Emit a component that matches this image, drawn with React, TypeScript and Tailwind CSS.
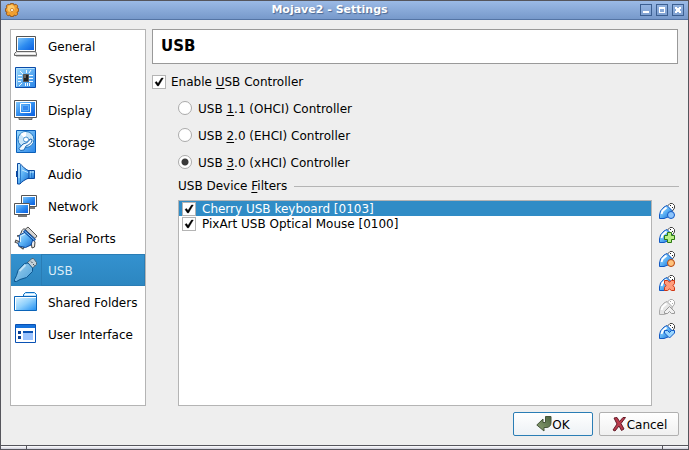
import React, { useState } from "react";

const GeneralIcon = () => (
  <svg viewBox="0 0 24 24" className="size-6 shrink-0">
    <path d="M2.500 2.500h19v15h-19z" fill="#fff" stroke="#555" />
    <path d="M4 4h16v12H4z" fill="url(#screen)" />
    <path d="M2.500 17.500h19l1 2v2H.5v-2z" fill="#e2e2e2" stroke="#666" />
    <path d="M3 19.500h18" stroke="#fff" />
    <path d="M2 22.500h21" stroke="#c4c4c4" />
  </svg>
);

const SystemIcon = () => (
  <svg viewBox="0 0 24 24" className="size-6 shrink-0">
    <path d="M1.500 1.500h20v20h-20z" fill="url(#tile)" stroke="#0b4aa8" />
    <path d="M2.500 20.500v-18h18" fill="none" stroke="#b4e2fd" />
    <path
      d="M4 9.500h4M4 12.500h4M4 15.500h3M15 9.500h4M15 12.500h4M15 15.500h4M12.500 4v3M15 7l2-3M11.500 17v3M13.500 17v3M15.500 17v3M8 17l-3 3M6 5l3 3"
      stroke="#f2faff"
    />
    <path d="M9.500 8.500h5v7h-5z" fill="#222" stroke="#555" />
    <path d="M10 9h2v3h-2z" fill="#666" />
  </svg>
);

const DisplayIcon = () => (
  <svg viewBox="0 0 24 24" className="size-6 shrink-0">
    <path d="M5 20h13v1.500H5z" fill="#ddd" stroke="#666" />
    <path d="M.5 2.500h22v17H.5z" fill="#fff" stroke="#555" />
    <path d="M2 4h19v14H2z" fill="url(#screen)" />
    <path d="M6.500 5.500h10v9h-10z" fill="none" stroke="#fff" />
    <path d="M8.500 7.500h6v5h-6z" fill="#3387ee" stroke="#5fb0f8" />
  </svg>
);

const StorageIcon = () => (
  <svg viewBox="0 0 24 24" className="size-6 shrink-0">
    <path d="M2.500 .5h19v22h-19z" fill="url(#tile)" stroke="#0b5fb8" />
    <circle cx="12" cy="9.500" r="8" fill="#c9e6fa" stroke="#2478c0" />
    <path d="M12 9.500L6.500 4A8 8 0 0112 2zM12 9.500l7 2.500a8 8 0 01-4 4z" fill="#fff" />
    <circle cx="12" cy="9.500" r="2.500" fill="#fff" stroke="#4b94cf" />
    <path
      d="M18 9.500c0 4-3 5-6 6.500l-2 4-3.500.5-1.500-2 4-4.500c3-1 5-1 7-5z"
      fill="#f4fbff"
      stroke="#1867b4"
    />
  </svg>
);

const AudioIcon = () => (
  <svg viewBox="0 0 24 24" className="size-6 shrink-0">
    <path d="M13 8.500h7.500v8H13z" fill="url(#metal)" stroke="#0b4aa0" />
    <path
      d="M3.500 1.500H6c2 2.500 5 5.500 9 7.500v7c-4 1.500-7 3.500-9 6H3.500z"
      fill="url(#metal)"
      stroke="#0b4aa0"
    />
    <path d="M2.500 9v6" stroke="#0b4aa0" />
    <path d="M6.500 3v18M17.500 9v7" stroke="#2a7acb" />
    <path d="M5 3v13M8 8l6 2.500M16 10h4" stroke="#c2e7ff" />
  </svg>
);

const NetworkIcon = () => (
  <svg viewBox="0 0 24 24" className="size-6 shrink-0">
    <path d="M12 14h9" stroke="#777" strokeWidth="2" />
    <path d="M7.500 1.500h15v11h-15z" fill="#fff" stroke="#555" />
    <path d="M9 3h12v8H9z" fill="url(#screen)" />
    <path d="M4 22h9" stroke="#777" strokeWidth="2" />
    <path d="M.5 9.500h15v11H.5z" fill="#fff" stroke="#555" />
    <path d="M2 11h12v8H2z" fill="url(#screen)" />
  </svg>
);

const SerialIcon = () => (
  <svg viewBox="0 0 24 24" className="size-6 shrink-0">
    <path d="M1 15l5 2M5 19l5 3.500" stroke="#555" strokeWidth="3" />
    <path d="M2 15.500l4 1.500M6 19.500l3 2" stroke="#ddd" />
    <path d="M11 3.500l3-2.500L23 10l-2 2.500z" fill="#d5d5d5" stroke="#555" />
    <path
      d="M3 10l3-.5 2-5 2-2 2 2-3 5zM17 16l1-4 3 4-.5 5-2.500 1z"
      fill="#eee"
      stroke="#444"
    />
    <path
      d="M5 9.500L11.500 6l7.500 7-2 6-5.500 2.500-6.500-1.500-1-2.500 2-2z"
      fill="url(#metal)"
      stroke="#0b4aa0"
    />
    <path d="M10 4.500l11 10" stroke="#0b4aa0" strokeWidth="3" />
    <path d="M10.500 5l10 9" stroke="#8fd0ff" />
    <path d="M6 10.500l5-2.500M6.500 11v5" stroke="#d5f0ff" />
  </svg>
);

const UsbIcon = () => (
  <svg viewBox="0 0 24 24" className="size-6 shrink-0">
    <path d="M13 5l5-4.500h1.500l3 4v2L18 10.500z" fill="#c3d0d8" stroke="#4e6676" />
    <path d="M17 3.500l1.500 1.500M19 6l1.500 1.500" stroke="#3c4d58" />
    <path
      d="M10.500 5.500l3.500-.5 4.500 5v3.500l-6 6-6.500 2-3.500 2h-2v-2l2-4 1.500-5z"
      fill="url(#plug)"
      stroke="#0d568f"
    />
    <path d="M5.500 13l6-6" stroke="#c0e2f6" strokeWidth="2" />
  </svg>
);

const FolderIcon = () => (
  <svg viewBox="0 0 24 24" className="size-6 shrink-0">
    <path d="M9.500 7V4.500l2-2h9l2 2V20H9.500z" fill="#bfe5ff" stroke="#0d70c4" />
    <path d="M11 4.500h10" stroke="#fff" />
    <path d="M.5 6.500h22v14H.5z" fill="url(#folder)" stroke="#0b64b8" />
    <path d="M1.500 20V7.500H22" fill="none" stroke="#fff" />
  </svg>
);

const InterfaceIcon = () => (
  <svg viewBox="0 0 24 24" className="size-6 shrink-0">
    <path d="M1.500 2.500h20v18h-20z" fill="#fff" stroke="#0a52b4" />
    <path d="M2 3h19v3H2z" fill="#1672dc" />
    <path d="M4 9h3v3H4zM4 14h3v3H4z" fill="#0a3f94" />
    <path d="M9 9h10v9H9z" fill="#9cc4ff" />
    <path d="M9 9h10v2H9z" fill="#0a52b4" />
  </svg>
);

const pages = [
  { name: "General", icon: GeneralIcon },
  { name: "System", icon: SystemIcon },
  { name: "Display", icon: DisplayIcon },
  { name: "Storage", icon: StorageIcon },
  { name: "Audio", icon: AudioIcon },
  { name: "Network", icon: NetworkIcon },
  { name: "Serial Ports", icon: SerialIcon },
  { name: "USB", icon: UsbIcon },
  { name: "Shared Folders", icon: FolderIcon },
  { name: "User Interface", icon: InterfaceIcon },
];

const controllers = [
  { id: "ohci", key: "1", rest: ".1 (OHCI) Controller" },
  { id: "ehci", key: "2", rest: ".0 (EHCI) Controller" },
  { id: "xhci", key: "3", rest: ".0 (xHCI) Controller" },
];

const tools = [
  {
    title: "Add empty filter",
    badge: <circle cx="12" cy="12" r="3.500" fill="#8cc4fc" stroke="#1259c3" />,
  },
  {
    title: "Add filter from device",
    badge: (
      <path
        d="M8.500 5.500h4v3h3v4h-3v3h-4v-3h-3v-4h3z"
        fill="#b9ee86"
        stroke="#2b7a12"
      />
    ),
  },
  {
    title: "Edit filter",
    badge: <circle cx="12" cy="12" r="3.500" fill="#ffc27c" stroke="#b5430d" />,
  },
  {
    title: "Remove filter",
    badge: (
      <path
        d="M5.500 5.500h3l2 1.500 2-1.500h3v3l-1.500 2 1.500 2v3h-3l-2-1.500-2 1.500h-3v-3l1.500-2-1.500-2z"
        fill="#ff9c7c"
        stroke="#cf3512"
      />
    ),
  },
  {
    title: "Move filter up",
    disabled: true,
    badge: (
      <path
        d="M5.500 12.500l5-5 5 5v2h-3l-2-2-2 2h-3z"
        fill="#f0f0f0"
        stroke="#999"
      />
    ),
  },
  {
    title: "Move filter down",
    badge: (
      <path
        d="M5.500 7.500h3l2 2 2-2h3V10l-5 5-5-5z"
        fill="#9ad6ff"
        stroke="#1259c3"
      />
    ),
  },
];

const CheckBox = ({ id, checked, onChange }: any) => (
  <span className="grid shrink-0 place-items-center">
    <input
      id={id}
      type="checkbox"
      checked={checked}
      onChange={onChange}
      className="col-start-1 row-start-1 size-[14px] appearance-none border border-[#b4b4b4] bg-white"
    />
    {checked && (
      <svg
        viewBox="0 0 14 14"
        className="pointer-events-none col-start-1 row-start-1 size-[14px]"
      >
        <path
          d="M3 7.500l1.500-1L6 8.500 9.500 3h1.800L6.500 11H5.500z"
          fill="#000"
          stroke="#000"
          strokeWidth=".4"
        />
      </svg>
    )}
  </span>
);

const TitleBar = () => (
  <header className="flex h-5 items-center border-t border-b border-t-[#55555c] border-b-[#5474a4] bg-linear-to-b from-[#9bbae6] to-[#7799cb] pr-1 pl-1">
    <svg viewBox="0 0 14 14" className="size-[14px]">
      <path
        d="M5.500.5h3l.5 1.500 2-.8 1.800 1.800-.8 2 1.500.5v3l-1.500.5.8 2-1.800 1.800-2-.8-.5 1.500h-3L5 12l-2 .8L1.200 11l.8-2-1.500-.5v-3L2 5l-.8-2L3 1.200l2 .8z"
        fill="#f09f30"
        stroke="#8a4c14"
        strokeWidth=".8"
      />
      <circle cx="6" cy="5.500" r="3.600" fill="#fcca6c" />
      <circle cx="7" cy="7" r="1.600" fill="#fff6e2" stroke="#c87a22" strokeWidth=".8" />
    </svg>
    <h1 className="flex-1 text-center text-[11px] font-bold text-white text-shadow-[1px_1px_1px_#4a6792]">
      Mojave2 - Settings
    </h1>
    <div className="flex gap-1">
      <button aria-label="Minimize" className="size-3 border border-[#3c5f91]">
        <svg viewBox="0 0 10 10" className="size-[10px]">
          <path d="M2 6h6v2H2z" fill="#fff" />
        </svg>
      </button>
      <button aria-label="Maximize" className="size-3 border border-[#3c5f91]">
        <svg viewBox="0 0 10 10" className="size-[10px]">
          <path d="M2 2h6v6H2zM3 4v3h4V4z" fill="#fff" fillRule="evenodd" />
        </svg>
      </button>
      <button aria-label="Close" className="size-3 border border-[#3c5f91]">
        <svg viewBox="0 0 10 10" className="size-[10px]">
          <path d="M2 2h2v1h2V2h2v2H7v2h1v2H6V7H4v1H2V6h1V4H2z" fill="#fff" />
        </svg>
      </button>
    </div>
  </header>
);

// gradients shared by all the icons
const Gradients = () => (
  <svg className="absolute size-0">
    <defs>
      <linearGradient id="screen" x1="0" y1="0" x2="1" y2="1">
        <stop offset="0" stopColor="#7cc4fb" />
        <stop offset=".5" stopColor="#2f8df0" />
        <stop offset="1" stopColor="#0a5fe0" />
      </linearGradient>
      <linearGradient id="tile" x1="0" y1="0" x2="1" y2="1">
        <stop offset="0" stopColor="#9bdafd" />
        <stop offset="1" stopColor="#2a86e8" />
      </linearGradient>
      <linearGradient id="metal" x1="0" y1="0" x2="1" y2="1">
        <stop offset="0" stopColor="#c0e8ff" />
        <stop offset=".5" stopColor="#5cb2f5" />
        <stop offset="1" stopColor="#1668cc" />
      </linearGradient>
      <linearGradient id="plug" x1="0" y1="0" x2="1" y2="1">
        <stop offset="0" stopColor="#9ccfee" />
        <stop offset="1" stopColor="#4fa2da" />
      </linearGradient>
      <linearGradient id="folder" x1="0" y1="0" x2="1" y2="1">
        <stop offset="0" stopColor="#e4f6ff" />
        <stop offset=".5" stopColor="#8fd0fc" />
        <stop offset="1" stopColor="#1d8df2" />
      </linearGradient>
      <linearGradient id="enter" x1="1" y1="0" x2="0" y2="1">
        <stop offset="0" stopColor="#4d6340" />
        <stop offset="1" stopColor="#8da274" />
      </linearGradient>
    </defs>
  </svg>
);

const App = () => {
  const [page, setPage] = useState("USB");
  const [enabled, setEnabled] = useState(true);
  const [controller, setController] = useState("xhci");
  const [selected, setSelected] = useState(1);
  const [filters, setFilters] = useState([
    { id: 1, name: "Cherry USB keyboard [0103]", active: true },
    { id: 2, name: "PixArt USB Optical Mouse [0100]", active: true },
  ]);

  const toggleFilter = (id: number) =>
    setFilters(
      filters.map((f) => (f.id === id ? { ...f, active: !f.active } : f))
    );

  return (
    <div className="flex min-h-screen flex-col border-x border-[#55555c] bg-[#eeeeee] font-['DejaVu_Sans',sans-serif] text-xs text-black">
      <Gradients />
      <TitleBar />
      <div className="flex flex-1 gap-[6px] px-[9px] pt-[9px]">
        <nav className="w-[136px] shrink-0 border border-[#b4b4b4] bg-white">
          {pages.map(({ name, icon: PageIcon }) => (
            <button
              key={name}
              onClick={() => setPage(name)}
              className={
                page === name
                  ? "flex h-8 w-full items-center bg-linear-to-b from-[#3492d0] to-[#2c86c0] pl-[3px] text-left whitespace-nowrap text-[#dcecf7]"
                  : "flex h-8 w-full items-center pl-[3px] text-left whitespace-nowrap"
              }
            >
              <PageIcon />
              <span
                className={
                  page === name
                    ? "ml-[3px] flex h-8 flex-1 items-center border border-[#2a7db5] pt-0.5 pl-[6px]"
                    : "pt-0.5 pl-[10px]"
                }
              >
                {name}
              </span>
            </button>
          ))}
        </nav>

        <main className="flex min-w-0 flex-1 flex-col">
          <h2 className="mr-px flex h-[35px] items-center border border-[#999] bg-white px-2 text-[15px] font-bold">
            USB
          </h2>
          <div className="flex h-[35px] items-center gap-[5px]">
            <CheckBox
              id="enable"
              checked={enabled}
              onChange={() => setEnabled(!enabled)}
            />
            <label htmlFor="enable">
              Enable <u className="underline-offset-2">U</u>SB Controller
            </label>
          </div>
          <div className="flex flex-1 flex-col pl-[26px]">
            {controllers.map((c) => (
              <label
                key={c.id}
                className="mb-[9px] flex h-[18px] items-center gap-[6px]"
              >
                <input
                  type="radio"
                  name="controller"
                  checked={controller === c.id}
                  onChange={() => setController(c.id)}
                  className="size-[14px] appearance-none rounded-full border border-[#aaa] bg-white checked:bg-[radial-gradient(circle,#3a3a3a_3px,#fff_4px)]"
                />
                <span className="pt-0.5">
                  USB <u className="underline-offset-2">{c.key}</u>
                  {c.rest}
                </span>
              </label>
            ))}
            <div className="flex h-5 items-center gap-[7px] pb-2">
              <h3>
                USB Device <u className="underline-offset-2">F</u>ilters
              </h3>
              <hr className="flex-1 border-t-[#b4b4b4]" />
            </div>
            <div className="flex flex-1 gap-[6px]">
              <ul className="flex-1 border border-[#b4b4b4] bg-white">
                {filters.map((f) => (
                  <li
                    key={f.id}
                    onClick={() => setSelected(f.id)}
                    className={
                      selected === f.id
                        ? "flex h-[15px] items-center gap-[6px] bg-[#308cc6] pl-[3px] text-white"
                        : "flex h-[15px] items-center gap-[6px] pl-[3px]"
                    }
                  >
                    <CheckBox
                      id={"filter" + f.id}
                      checked={f.active}
                      onChange={() => toggleFilter(f.id)}
                    />
                    <label htmlFor={"filter" + f.id}>{f.name}</label>
                  </li>
                ))}
              </ul>
              <div className="flex w-[21px] flex-col gap-2 pt-[3px] pl-px">
                {tools.map((t) => (
                  <button
                    key={t.title}
                    aria-label={t.title}
                    disabled={t.disabled}
                    className="size-4"
                  >
                    <svg viewBox="0 0 16 16" className="size-4">
                      <path
                        d="M8 3.500l3-3h2.500l2 2V5l-2.500 3.500z"
                        fill="#fff"
                        stroke={t.disabled ? "#aaa" : "#444"}
                      />
                      <path
                        d="M11 2h1v1h-1zM13 4h1v1h-1z"
                        fill={t.disabled ? "#aaa" : "#222"}
                      />
                      <path
                        d="M.5 15.500V12l1-4 3.500-4 3-1.500 5 5V10L9 14l-4 1.500z"
                        fill={t.disabled ? "#e6e6e6" : "url(#metal)"}
                        stroke={t.disabled ? "#aaa" : "#1259c3"}
                      />
                      <path
                        d="M2.500 11l1-3 4-3.500"
                        fill="none"
                        stroke="#fff"
                        strokeWidth="2"
                      />
                      {t.badge}
                    </svg>
                  </button>
                ))}
              </div>
            </div>
          </div>
        </main>
      </div>

      <footer className="flex h-[39px] items-start justify-end gap-[6px] px-[9px] pt-[6px]">
        <button className="flex h-6 w-20 items-center justify-center rounded-xs border border-[#2a7db5] bg-linear-to-b from-white to-[#edf1f5]">
          <svg viewBox="0 0 16 16" className="size-4">
            <path
              d="M9.500 .5h5.500v6c0 3.500-2 5-5 5H8V15L.8 9 7 3v3.500h2.500z"
              fill="url(#enter)"
              stroke="#46553b"
            />
          </svg>
          <span className="pt-0.5">OK</span>
        </button>
        <button className="flex h-6 w-20 items-center justify-center rounded-xs border border-[#b0b0b0] bg-linear-to-b from-white to-[#f0f0f0]">
          <svg viewBox="0 0 16 16" className="size-4">
            <path
              d="M3 2l3-.5 2.500 4L12 1.500h2.500l-4.500 6 3 5.500-2.500 1.500-2.500-4.500L4 15l-2-1 4-6z"
              fill="#b93a4b"
              stroke="#651c28"
            />
          </svg>
          <span className="pt-0.5">Cancel</span>
        </button>
      </footer>

      <div className="flex h-[5px] border-y border-[#55555c] bg-linear-to-b from-white to-[#cfcfdc]">
        <span className="w-[26px] border-r border-[#55555c]" />
        <span className="flex-1" />
        <span className="w-[26px] border-l border-[#55555c]" />
      </div>
    </div>
  );
};

export default App;
